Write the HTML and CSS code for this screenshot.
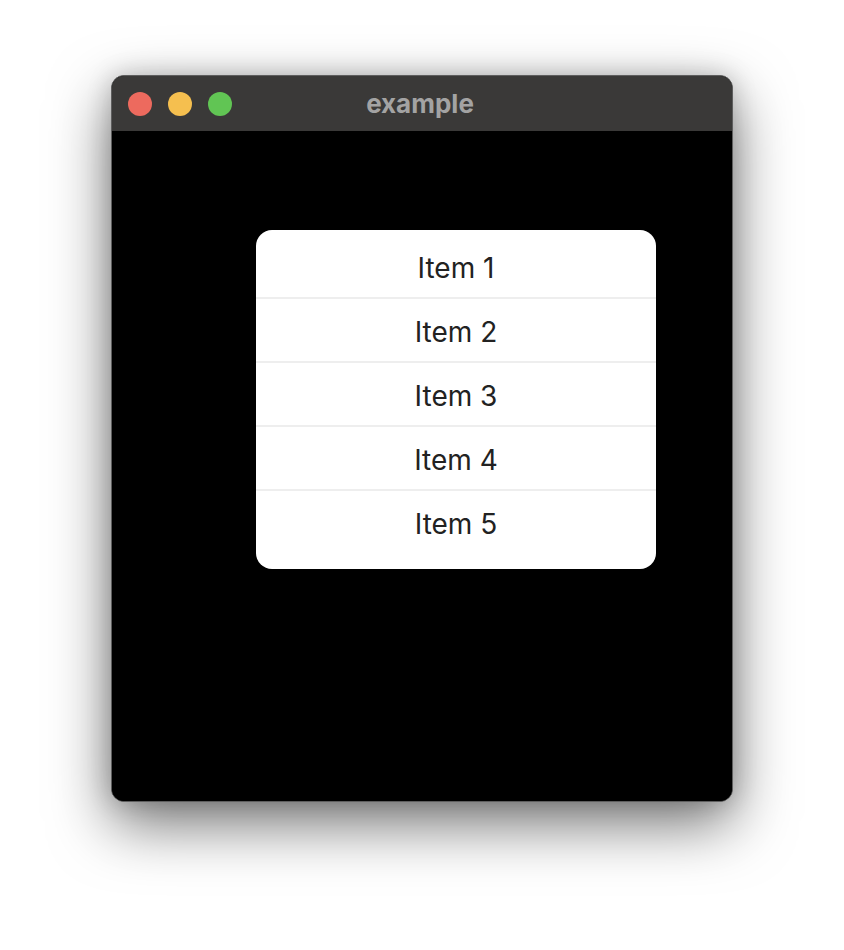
FILE: index.html
```html
<!DOCTYPE html>
<html>
<head>
<meta charset="utf-8">
<link rel="stylesheet" href="styles.css">
</head>
<body>
<div class="window">
  <div class="titlebar">
    <div class="lights">
      <span class="light red"></span>
      <span class="light yellow"></span>
      <span class="light green"></span>
    </div>
    <div class="title">example</div>
  </div>
  <div class="content">
    <div class="card">
      <div class="row">Item 1</div>
      <div class="row">Item 2</div>
      <div class="row">Item 3</div>
      <div class="row">Item 4</div>
      <div class="row last">Item 5</div>
    </div>
  </div>
</div>
</body>
</html>
```
FILE: styles.css
```css
html, body {
  margin: 0;
  padding: 0;
  background: #ffffff;
}
body {
  width: 844px;
  height: 950px;
  padding: 75px 0 0 111px;
  box-sizing: border-box;
  font-family: Inter, "Liberation Sans", sans-serif;
}
.window {
  width: 622px;
  height: 727px;
  box-sizing: border-box;
  border: 1px solid #5e5e5e;
  border-radius: 13px;
  background: #000;
  overflow: hidden;
  display: flex;
  flex-direction: column;
  box-shadow: 0 22px 60px rgba(0,0,0,0.55), 0 0 24px rgba(0,0,0,0.18);
}
.titlebar {
  height: 55px;
  flex: none;
  background: #3a3938;
  position: relative;
  display: flex;
  align-items: center;
}
.lights {
  display: flex;
  gap: 16px;
  padding-left: 16px;
  position: relative;
  z-index: 1;
}
.light {
  width: 24px;
  height: 24px;
  border-radius: 50%;
  display: block;
}
.red { background: #ed6a5e; }
.yellow { background: #f5bf4f; }
.green { background: #61c554; }
.title {
  position: absolute;
  left: 0;
  right: 4px;
  top: 0;
  bottom: 0;
  display: flex;
  align-items: center;
  justify-content: center;
  color: #a3a3a3;
  font-weight: 700;
  font-size: 26px;
  padding-bottom: 1px;
}
.content {
  flex: 1;
  background: #000;
  padding: 99px 0 0 144px;
}
.card {
  width: 400px;
  height: 339px;
  box-sizing: border-box;
  background: #fff;
  border-radius: 16px;
  padding-top: 5px;
}
.row {
  height: 64px;
  box-sizing: border-box;
  padding-top: 4px;
  border-bottom: 2px solid #eeeeee;
  display: flex;
  align-items: center;
  justify-content: center;
  font-size: 28px;
  color: #222;
}
.row.last {
  height: 62px;
  border-bottom: none;
}
```
